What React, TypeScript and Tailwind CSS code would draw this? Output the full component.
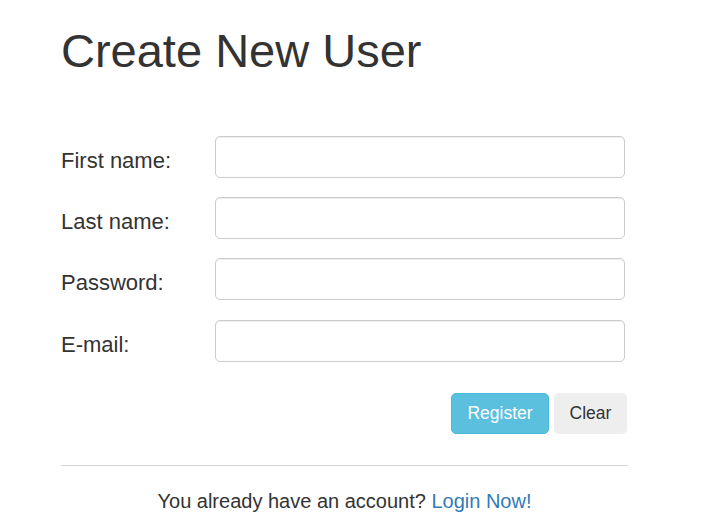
const fields = ["First name:", "Last name:", "Password:", "E-mail:"];

export default function App() {
  return (
    <div className="min-h-screen bg-white text-[#333] font-['Liberation_Sans',Arial,sans-serif]">
      <div className="ml-[61px] w-[567px] pt-[25px]">
        <h1 className="text-[47px] leading-[1.1] font-normal">Create New User</h1>

        <form className="mt-[59px] flex flex-col gap-[19.3px]">
          {fields.map((label) => (
            <div key={label} className="flex items-start">
              <label className="w-[154px] shrink-0 pt-[14px] text-[22px] leading-[22px]">{label}</label>
              <input
                type={label === "Password:" ? "password" : "text"}
                className="h-[42px] w-[410px] rounded-[5px] border border-[#ccc] bg-white px-3 text-[18px] outline-none shadow-[inset_0_1px_1px_rgba(0,0,0,0.075)]"
              />
            </div>
          ))}

          <div className="mt-[12px] flex justify-end gap-[5px] pr-[1px]">
            <button
              type="submit"
              className="flex h-[41px] w-[98px] items-center justify-center rounded-[5px] border border-[#46b8da] bg-[#5bc0de] text-[17.5px] text-white"
            >
              Register
            </button>
            <button
              type="reset"
              className="flex h-[41px] w-[73px] items-center justify-center rounded-[5px] bg-[#eeeeee] text-[17.5px] text-[#333]"
            >
              Clear
            </button>
          </div>
        </form>

        <hr className="mt-[31px] border-0 border-t border-[#d3d3d3]" />

        <p className="mt-[25px] text-center text-[20px] leading-[20px]">
          You already have an account? <a href="#" className="text-[#337ab7]">Login Now!</a>
        </p>
      </div>
    </div>
  );
}
